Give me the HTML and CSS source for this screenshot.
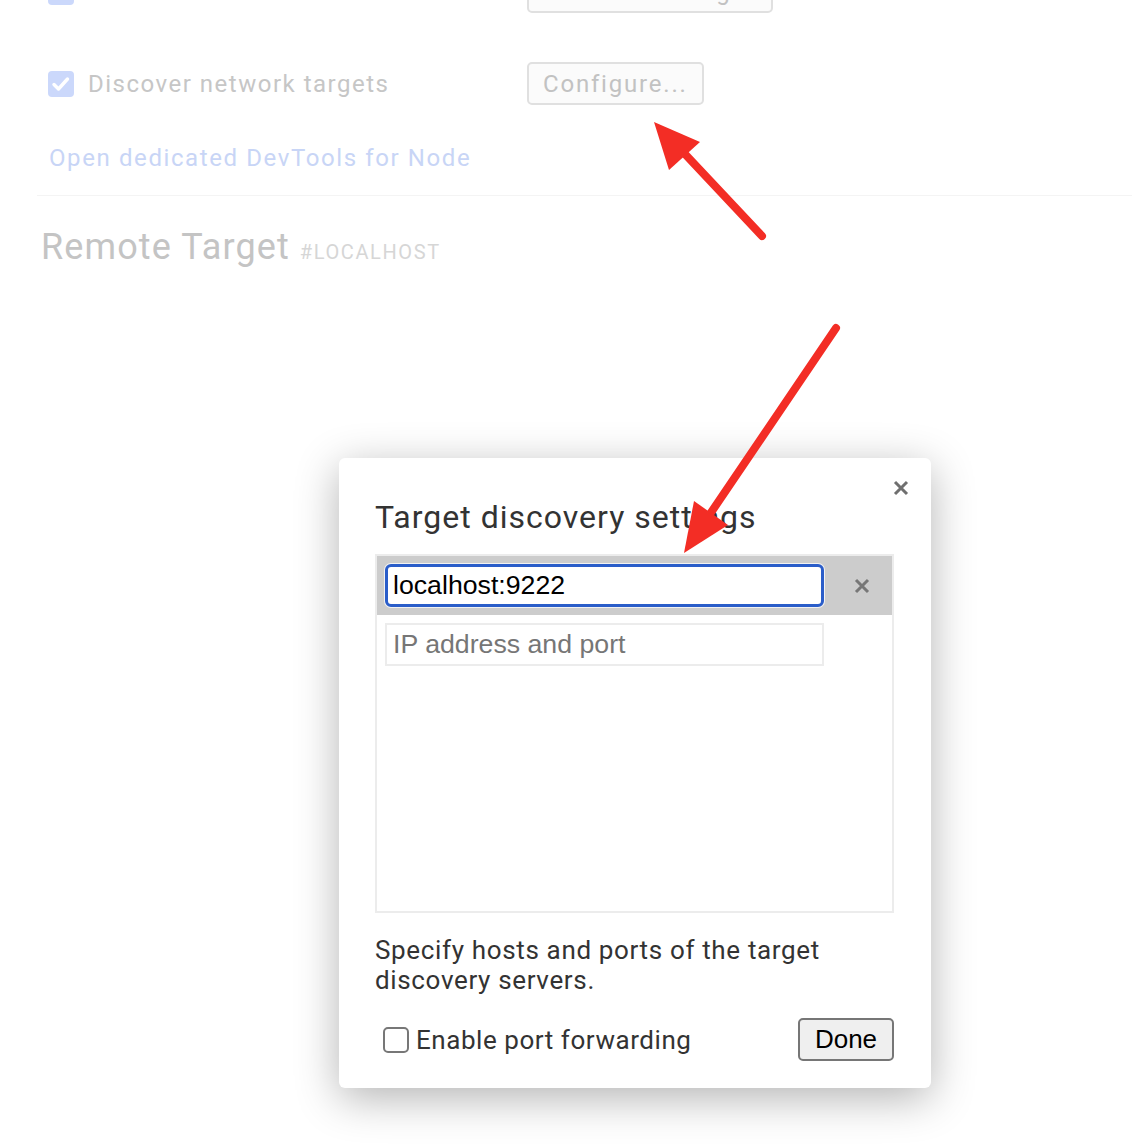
FILE: index.html
```html
<!DOCTYPE html>
<html lang="en">
<head>
    <meta charset="UTF-8">
    <title>Remote Target</title>
    <link rel="stylesheet" href="styles.css">
</head>
<body>
<div class="page">
    <div class="settings">
        <div class="row">
            <label class="check">
                <span class="check_box"><svg width="26" height="26" viewBox="0 0 26 26"><path d="M6 13.5l4.5 4.5 9-10" fill="none" stroke="#fff" stroke-width="3.4" stroke-linecap="round" stroke-linejoin="round"/></svg></span>
                Discover USB devices
            </label>
            <button type="button" class="btn_faded btn_wide">Port forwarding...</button>
        </div>
        <div class="row">
            <label class="check">
                <span class="check_box"><svg width="26" height="26" viewBox="0 0 26 26"><path d="M6 13.5l4.5 4.5 9-10" fill="none" stroke="#fff" stroke-width="3.4" stroke-linecap="round" stroke-linejoin="round"/></svg></span>
                Discover network targets
            </label>
            <button type="button" class="btn_faded">Configure...</button>
        </div>
        <a class="node_link" href="#">Open dedicated DevTools for Node</a>
    </div>
    <div class="divider"></div>
    <h2 class="target_title">Remote Target <span class="target_host">#LOCALHOST</span></h2>
</div>

<div class="dialog">
    <div class="dialog_close">
        <svg width="16" height="16" viewBox="0 0 16 16"><path d="M2 2l12 12M14 2L2 14" stroke="#6f6f6f" stroke-width="3"/></svg>
    </div>
    <div class="dialog_title">Target discovery settings</div>
    <div class="host_list">
        <div class="host_row selected">
            <input type="text" class="host_input focused" value="localhost:9222">
            <span class="host_remove">
                <svg width="16" height="16" viewBox="0 0 16 16"><path d="M2 2l12 12M14 2L2 14" stroke="#777" stroke-width="3"/></svg>
            </span>
        </div>
        <div class="host_row">
            <input type="text" class="host_input" placeholder="IP address and port">
        </div>
    </div>
    <div class="dialog_note">Specify hosts and ports of the target<br>discovery servers.</div>
    <div class="dialog_foot">
        <label class="fwd_check"><span class="fwd_box"></span>Enable port forwarding</label>
        <button type="button" class="btn_done">Done</button>
    </div>
</div>

<svg class="arrows" width="1132" height="1144" viewBox="0 0 1132 1144">
    <line x1="762" y1="236" x2="684" y2="153" stroke="#f32d25" stroke-width="8" stroke-linecap="round"/>
    <polygon points="654,122 700,142 669,170" fill="#f32d25"/>
    <line x1="836" y1="328" x2="708" y2="517" stroke="#f32d25" stroke-width="8" stroke-linecap="round"/>
    <polygon points="684,553 728,525 694,501" fill="#f32d25"/>
</svg>
</body>
</html>
```

FILE: styles.css
```css
html,body,div{
    margin: 0;
    padding: 0;
}
body{
    width: 1132px;
    height: 1144px;
    overflow: hidden;
    position: relative;
    background-color: #fff;
    font-family: Roboto, "Liberation Sans", sans-serif;
}
.settings{
    margin-top: -30px;
    padding-left: 48px;
}
.row{
    display: flex;
    align-items: center;
    height: 43px;
}
.row + .row{
    margin-top: 49px;
}
.check{
    flex: 0 0 479px;
    display: flex;
    align-items: center;
    font-size: 24px;
    letter-spacing: 1.5px;
    color: #c6c6c6;
}
.check_box{
    width: 26px;
    height: 26px;
    margin-right: 14px;
    border-radius: 4px;
    background-color: #cbd8fb;
    display: flex;
}
.btn_faded{
    box-sizing: border-box;
    height: 43px;
    padding: 0 14px;
    border: 2px solid #e0e0e0;
    border-radius: 5px;
    background-color: #fbfbfb;
    color: #c2c2c2;
    font-family: Roboto, "Liberation Sans", sans-serif;
    font-size: 24px;
    letter-spacing: 1.8px;
    white-space: nowrap;
}
.btn_wide{
    width: 246px;
    padding: 0 10px;
    letter-spacing: 1.2px;
}
.node_link{
    display: block;
    margin: 38px 0 0 1px;
    line-height: 30px;
    font-size: 24px;
    letter-spacing: 1.6px;
    color: #c8d5f6;
    text-decoration: none;
}
.divider{
    margin: 22px 0 0 37px;
    height: 1px;
    background-color: #f4f4f4;
}
.target_title{
    margin: 29px 0 0 41px;
    font-size: 36px;
    line-height: 44px;
    letter-spacing: 1.1px;
    font-weight: normal;
    color: #c4c4c4;
}
.target_host{
    font-size: 20px;
    letter-spacing: 1.6px;
    color: #d6d6d6;
}

/* dialog */
.dialog{
    position: absolute;
    left: 339px;
    top: 458px;
    box-sizing: border-box;
    width: 592px;
    height: 630px;
    padding: 39px 37px 27px 36px;
    background-color: #fff;
    border-radius: 6px;
    box-shadow: 0 10px 44px rgba(0,0,0,0.3);
    color: #333;
}
.dialog_close{
    position: absolute;
    right: 22px;
    top: 22px;
    width: 16px;
    height: 16px;
}
.dialog_title{
    font-size: 32px;
    line-height: 40px;
    letter-spacing: 1px;
}
.host_list{
    box-sizing: border-box;
    height: 359px;
    margin-top: 17px;
    border: 2px solid #ececec;
}
.host_row{
    display: flex;
    align-items: center;
    padding: 8px;
}
.host_row.selected{
    background-color: #cccccc;
}
.host_input{
    box-sizing: border-box;
    width: 439px;
    height: 43px;
    padding: 0 6px;
    border: 2px solid #ececec;
    background-color: #fff;
    font-family: "Liberation Sans", Arial, sans-serif;
    font-size: 26.7px;
    color: #000;
    outline: none;
}
.host_input::placeholder{
    color: #767676;
}
.host_input.focused{
    border: 3px solid #2a5dc9;
    border-radius: 6px;
    padding: 0 5px;
    box-shadow: 0 0 0 1px #f2f2f2;
}
.host_remove{
    display: flex;
    margin-left: 30px;
}
.dialog_note{
    margin-top: 22px;
    font-size: 26px;
    line-height: 30px;
    letter-spacing: 0.65px;
}
.dialog_foot{
    display: flex;
    align-items: center;
    justify-content: space-between;
    margin-top: 23px;
}
.fwd_check{
    display: flex;
    align-items: center;
    margin-left: 8px;
    font-size: 26px;
    letter-spacing: 0.55px;
}
.fwd_box{
    box-sizing: border-box;
    width: 26px;
    height: 26px;
    margin-right: 7px;
    border: 2px solid #777;
    border-radius: 5px;
}
.btn_done{
    box-sizing: border-box;
    width: 96px;
    height: 43px;
    border: 2px solid #767676;
    border-radius: 5px;
    background-color: #efefef;
    font-family: "Liberation Sans", Arial, sans-serif;
    font-size: 26px;
    color: #000;
}
.arrows{
    position: absolute;
    left: 0;
    top: 0;
}
```
